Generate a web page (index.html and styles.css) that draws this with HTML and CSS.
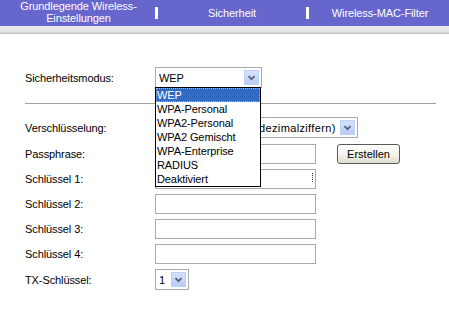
FILE: index.html
```html
<!DOCTYPE html>
<html lang="de">
<head>
    <meta charset="UTF-8">
    <title>Wireless-Sicherheit</title>
    <link rel="stylesheet" href="styles.css">
</head>
<body>
    <div class="tabs">
        <div class="tab tab-first">Grundlegende Wireless-<br>Einstellungen</div>
        <div class="tab-sep"></div>
        <div class="tab tab-mid">Sicherheit</div>
        <div class="tab-sep"></div>
        <div class="tab tab-last">Wireless-MAC-Filter</div>
    </div>
    <div class="band"></div>

    <div class="content">
        <div class="row row-mode">
            <span class="label">Sicherheitsmodus:</span>
            <div class="select-wrap">
                <div class="select select-mode">
                    <span class="select-text">WEP</span>
                    <span class="arrow"><svg width="15" height="15" viewBox="0 0 15 15"><path d="M4 6 L7.5 9.5 L11 6" fill="none" stroke="#4d6185" stroke-width="2"/></svg></span>
                </div>
                <ul class="dropdown">
                    <li class="active">WEP</li>
                    <li>WPA-Personal</li>
                    <li>WPA2-Personal</li>
                    <li>WPA2 Gemischt</li>
                    <li>WPA-Enterprise</li>
                    <li>RADIUS</li>
                    <li>Deaktiviert</li>
                </ul>
            </div>
        </div>

        <div class="divider"></div>

        <div class="row row-select">
            <span class="label">Verschlüsselung:</span>
            <div class="select select-enc">
                <span class="select-text">64 Bit (10 Hexadezimalziffern)</span>
                <span class="arrow"><svg width="15" height="15" viewBox="0 0 15 15"><path d="M4 6 L7.5 9.5 L11 6" fill="none" stroke="#4d6185" stroke-width="2"/></svg></span>
            </div>
        </div>
        <div class="row">
            <span class="label">Passphrase:</span>
            <input class="field" type="text">
            <button class="btn" type="button">Erstellen</button>
        </div>
        <div class="row">
            <span class="label">Schlüssel 1:</span>
            <span class="field-wrap">
                <input class="field" type="text">
                <span class="grip"></span>
            </span>
        </div>
        <div class="row">
            <span class="label">Schlüssel 2:</span>
            <input class="field" type="text">
        </div>
        <div class="row">
            <span class="label">Schlüssel 3:</span>
            <input class="field" type="text">
        </div>
        <div class="row">
            <span class="label">Schlüssel 4:</span>
            <input class="field" type="text">
        </div>
        <div class="row row-select">
            <span class="label">TX-Schlüssel:</span>
            <div class="select select-tx">
                <span class="select-text">1</span>
                <span class="arrow"><svg width="15" height="15" viewBox="0 0 15 15"><path d="M4 6 L7.5 9.5 L11 6" fill="none" stroke="#4d6185" stroke-width="2"/></svg></span>
            </div>
        </div>
    </div>
</body>
</html>
```

FILE: styles.css
```css
* {
    box-sizing: border-box;
    margin: 0;
    padding: 0;
}

body {
    font-family: "Liberation Sans", Arial, sans-serif;
    font-size: 11px;
    letter-spacing: -0.1px;
    color: #000;
    background-color: #fff;
}

/* top tab bar */
.tabs {
    display: flex;
    align-items: center;
    height: 26px;
    background-color: #6666cc;
    color: #fff;
}

.tab {
    text-align: center;
    line-height: 12px;
}

.tab-first {
    width: 155px;
    align-self: flex-start;
    padding-left: 2px;
}

.tab-mid {
    width: 148px;
}

.tab-last {
    flex: 1;
    padding-left: 2px;
}

.tab-sep {
    width: 3px;
    height: 12px;
    background-color: #fff;
}

.band {
    height: 8px;
    background: linear-gradient(#ececec, #e4e4e4 70%, #bdbdbd);
}

/* form */
.content {
    padding: 33px 0 0 25px;
}

.row {
    display: flex;
    align-items: center;
    height: 20px;
    margin-bottom: 5px;
}

.row-mode {
    height: 21px;
    margin-bottom: 0;
}

.row-select {
    height: 21px;
    margin-bottom: 6px;
}

.label {
    width: 130px;
    flex-shrink: 0;
}

.divider {
    width: 411px;
    height: 1px;
    background-color: #a3a3a3;
    margin: 15px 0 13px;
}

.select-wrap {
    position: relative;
}

.select {
    display: flex;
    align-items: center;
    height: 21px;
    border: 1px solid #a3aab6;
    background-color: #fff;
    padding: 0 2px 0 3px;
}

.select-text {
    flex: 1;
    white-space: nowrap;
    overflow: hidden;
}

.select-mode {
    width: 107px;
}

.select-enc {
    width: 203px;
}

.select-enc .select-text {
    letter-spacing: 0.35px;
    padding-left: 19px;
}

.select-tx {
    width: 34px;
}

.arrow {
    width: 15px;
    height: 15px;
    flex-shrink: 0;
    background: linear-gradient(#d6e2fb, #b9cdf7);
    border: 1px solid #bdd0f7;
    display: flex;
    align-items: center;
    justify-content: center;
}

.arrow svg {
    display: block;
}

.dropdown {
    position: absolute;
    top: 20px;
    left: 0;
    width: 106px;
    list-style: none;
    border: 1px solid #000;
    background-color: #fff;
    z-index: 5;
}

.dropdown li {
    height: 14px;
    line-height: 14px;
    padding-left: 1px;
    white-space: nowrap;
}

.dropdown li.active {
    background-color: #316ac5;
    color: #fff;
    outline: 1px dotted #9fb6e0;
    outline-offset: -1px;
}

.field {
    width: 161px;
    height: 20px;
    border: 1px solid #a5a9b0;
    font: inherit;
    padding: 0 3px;
    background-color: #fff;
}

.field-wrap {
    position: relative;
    display: block;
}

.grip {
    position: absolute;
    right: 3px;
    top: 4px;
    width: 1px;
    height: 9px;
    border-left: 1px dotted #333;
}

.btn {
    margin-left: 21px;
    width: 63px;
    height: 20px;
    font: inherit;
    border: 1px solid #5a5a5a;
    border-radius: 3px;
    background: linear-gradient(#ffffff, #f3f2ea 60%, #dedbcd);
    color: #000;
}
```
